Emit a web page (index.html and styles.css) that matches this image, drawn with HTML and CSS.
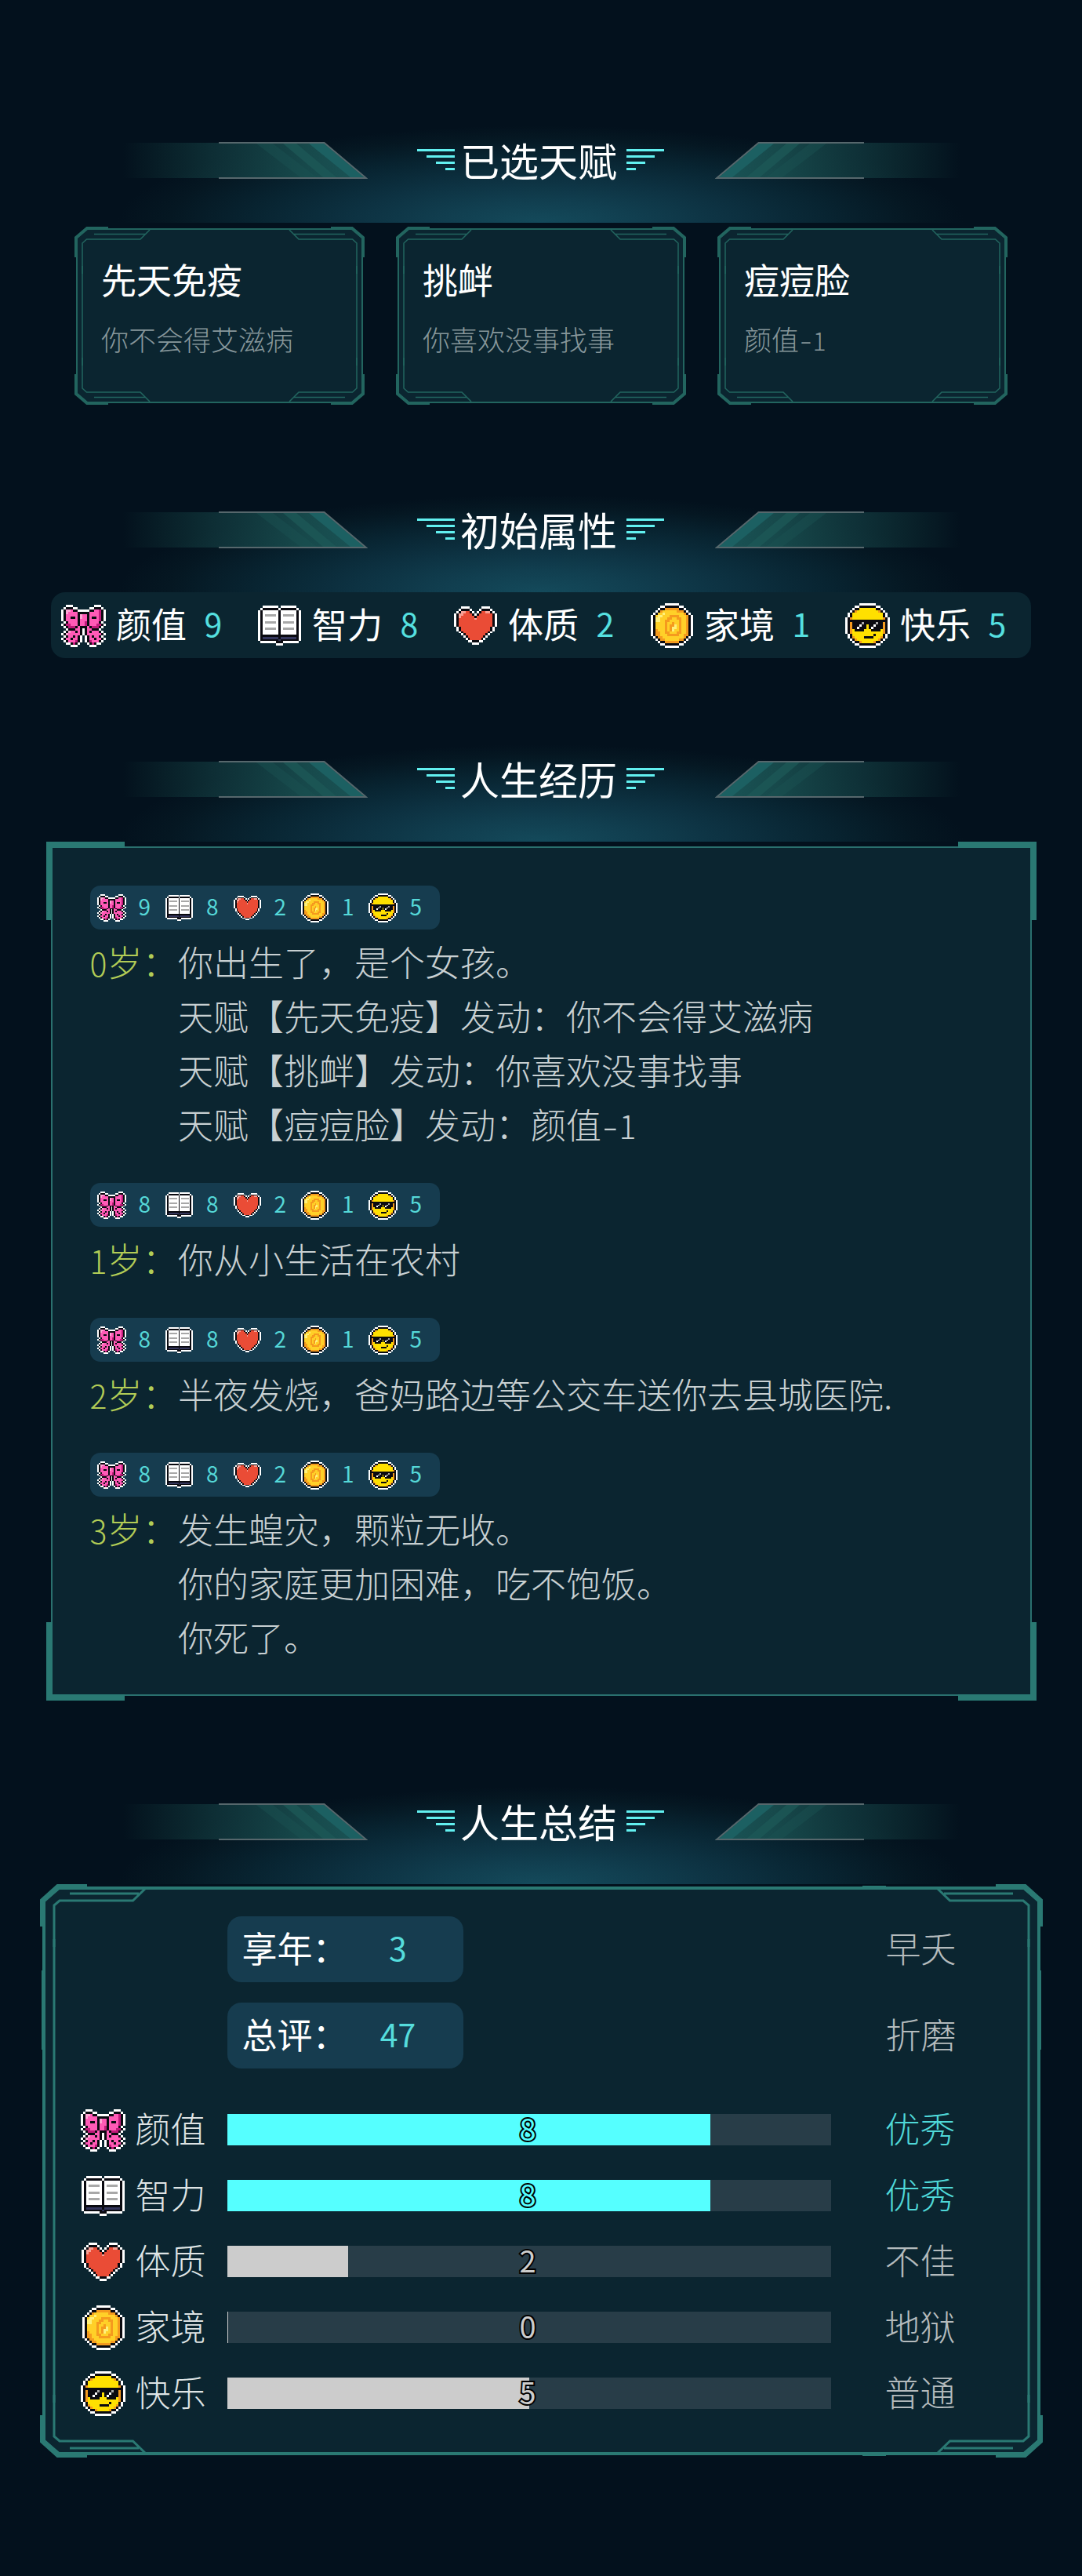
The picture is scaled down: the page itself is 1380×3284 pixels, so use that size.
FILE: index.html
```html
<!DOCTYPE html>
<html lang="zh-CN">
<head>
    <meta charset="UTF-8">
    <meta name="viewport" content="width=device-width, initial-scale=1.0">
    <title>人生总结</title>
    <link rel="stylesheet" href="styles.css">
</head>
<body>
    <!-- shared shapes -->
    <svg class="defs" width="0" height="0">
        <defs>
            <linearGradient id="plateFill" x1="0" x2="1" y1="0" y2="0">
                <stop offset="0" stop-color="#14403f" stop-opacity="0"/>
                <stop offset="0.4" stop-color="#123a3f" stop-opacity="0.75"/>
                <stop offset="0.75" stop-color="#17494b"/>
                <stop offset="1" stop-color="#1a5557"/>
            </linearGradient>
            <symbol id="plate" viewBox="0 0 312 47">
                <path d="M0 1H256L310 46H0Z" fill="url(#plateFill)"/>
                <path d="M170 2H191L247 45H226Z" fill="#1b5352" opacity="0.45"/>
                <path d="M204 2H221L272 45H255Z" fill="#1d5856" opacity="0.8"/>
                <path d="M237 2H256L307 45H290Z" fill="#1c6062"/>
                <path d="M122 1H256.500L310 46H122" fill="none" stroke="#56676c" stroke-width="2"/>
            </symbol>
            <symbol id="wing" viewBox="0 0 48 27">
                <path d="M0 0H48V3H0ZM12 8H48V11H12ZM24 16H48V19H24ZM36 24H48V27H36Z" fill="#62f0f0"/>
            </symbol>
            <g id="cardCorner" fill="none" stroke="#22655f">
                <path d="M2 39V14L16 2H43" stroke-width="4"/>
                <path d="M10 60V21L15.500 16H84L96 4M25 9.500H91" stroke-width="1.500"/>
            </g>
            <symbol id="cardFrame" viewBox="0 0 370 227">
                <path d="M3 14L16 3H354L367 14V213L354 224H16L3 213Z" fill="#0b2530" stroke="#22655f" stroke-width="2"/>
                <path d="M10 50V177M360 50V177" stroke="#22655f" stroke-width="1.500"/>
                <use href="#cardCorner"/>
                <use href="#cardCorner" transform="translate(370 0) scale(-1 1)"/>
                <use href="#cardCorner" transform="translate(0 227) scale(1 -1)"/>
                <use href="#cardCorner" transform="translate(370 227) scale(-1 -1)"/>
            </symbol>
            <g id="panelCorner" fill="none" stroke="#2a7973">
                <path d="M3.500 54V21L23 3.500H60" stroke-width="7"/>
                <path d="M18 80V27L25 21H118.500L134 6M38 12H126" stroke-width="3"/>
            </g>
        </defs>
    </svg>

    <header class="section-title first">
        <svg class="plate"><use href="#plate"/></svg>
        <svg class="wing"><use href="#wing"/></svg>
        <h2>已选天赋</h2>
        <svg class="wing flip"><use href="#wing"/></svg>
        <svg class="plate flip"><use href="#plate"/></svg>
    </header>
    <section class="talents">
        <div class="card">
            <svg class="frame"><use href="#cardFrame"/></svg>
            <h3>先天免疫</h3>
            <p>你不会得艾滋病</p>
        </div>
        <div class="card">
            <svg class="frame"><use href="#cardFrame"/></svg>
            <h3>挑衅</h3>
            <p>你喜欢没事找事</p>
        </div>
        <div class="card">
            <svg class="frame"><use href="#cardFrame"/></svg>
            <h3>痘痘脸</h3>
            <p>颜值<span class="minus">-</span><span class="num">1</span></p>
        </div>
    </section>

    <header class="section-title second">
        <svg class="plate"><use href="#plate"/></svg>
        <svg class="wing"><use href="#wing"/></svg>
        <h2>初始属性</h2>
        <svg class="wing flip"><use href="#wing"/></svg>
        <svg class="plate flip"><use href="#plate"/></svg>
    </header>
    <section class="attributes">
        <div class="attribute"><svg class="icon" data-icon="bow"></svg><span class="name">颜值</span><span class="num value">9</span></div>
        <div class="attribute"><svg class="icon" data-icon="book"></svg><span class="name">智力</span><span class="num value">8</span></div>
        <div class="attribute"><svg class="icon" data-icon="heart"></svg><span class="name">体质</span><span class="num value">2</span></div>
        <div class="attribute"><svg class="icon" data-icon="coin"></svg><span class="name">家境</span><span class="num value">1</span></div>
        <div class="attribute"><svg class="icon" data-icon="face"></svg><span class="name">快乐</span><span class="num value">5</span></div>
    </section>

    <header class="section-title third">
        <svg class="plate"><use href="#plate"/></svg>
        <svg class="wing"><use href="#wing"/></svg>
        <h2>人生经历</h2>
        <svg class="wing flip"><use href="#wing"/></svg>
        <svg class="plate flip"><use href="#plate"/></svg>
    </header>
    <section class="history">
        <i class="corner tl"></i><i class="corner tr"></i><i class="corner bl"></i><i class="corner br"></i>
        <div class="record">
            <div class="status">
                <svg class="icon" data-icon="bow"></svg><span class="num">9</span>
                <svg class="icon" data-icon="book"></svg><span class="num">8</span>
                <svg class="icon" data-icon="heart"></svg><span class="num">2</span>
                <svg class="icon" data-icon="coin"></svg><span class="num">1</span>
                <svg class="icon" data-icon="face"></svg><span class="num">5</span>
            </div>
            <div class="event">
                <div class="age"><span class="num">0</span>岁：</div>
                <div class="text">
                    <p>你出生了，是个女孩。</p>
                    <p>天赋【先天免疫】发动：你不会得艾滋病</p>
                    <p>天赋【挑衅】发动：你喜欢没事找事</p>
                    <p>天赋【痘痘脸】发动：颜值<span class="minus">-</span><span class="num">1</span></p>
                </div>
            </div>
        </div>
        <div class="record">
            <div class="status">
                <svg class="icon" data-icon="bow"></svg><span class="num">8</span>
                <svg class="icon" data-icon="book"></svg><span class="num">8</span>
                <svg class="icon" data-icon="heart"></svg><span class="num">2</span>
                <svg class="icon" data-icon="coin"></svg><span class="num">1</span>
                <svg class="icon" data-icon="face"></svg><span class="num">5</span>
            </div>
            <div class="event">
                <div class="age"><span class="num">1</span>岁：</div>
                <div class="text">
                    <p>你从小生活在农村</p>
                </div>
            </div>
        </div>
        <div class="record">
            <div class="status">
                <svg class="icon" data-icon="bow"></svg><span class="num">8</span>
                <svg class="icon" data-icon="book"></svg><span class="num">8</span>
                <svg class="icon" data-icon="heart"></svg><span class="num">2</span>
                <svg class="icon" data-icon="coin"></svg><span class="num">1</span>
                <svg class="icon" data-icon="face"></svg><span class="num">5</span>
            </div>
            <div class="event">
                <div class="age"><span class="num">2</span>岁：</div>
                <div class="text">
                    <p>半夜发烧，爸妈路边等公交车送你去县城医院.</p>
                </div>
            </div>
        </div>
        <div class="record">
            <div class="status">
                <svg class="icon" data-icon="bow"></svg><span class="num">8</span>
                <svg class="icon" data-icon="book"></svg><span class="num">8</span>
                <svg class="icon" data-icon="heart"></svg><span class="num">2</span>
                <svg class="icon" data-icon="coin"></svg><span class="num">1</span>
                <svg class="icon" data-icon="face"></svg><span class="num">5</span>
            </div>
            <div class="event">
                <div class="age"><span class="num">3</span>岁：</div>
                <div class="text">
                    <p>发生蝗灾，颗粒无收。</p>
                    <p>你的家庭更加困难，吃不饱饭。</p>
                    <p>你死了。</p>
                </div>
            </div>
        </div>
    </section>

    <header class="section-title fourth">
        <svg class="plate"><use href="#plate"/></svg>
        <svg class="wing"><use href="#wing"/></svg>
        <h2>人生总结</h2>
        <svg class="wing flip"><use href="#wing"/></svg>
        <svg class="plate flip"><use href="#plate"/></svg>
    </header>
    <section class="summary">
        <svg class="frame" viewBox="0 0 1279 731">
            <path d="M5 21L24 5H1255L1274 21V710L1255 726H24L5 710Z" fill="#0b2530" stroke="#2a7973" stroke-width="4"/>
            <path d="M18 70V661M1261 70V661" stroke="#2a7973" stroke-width="3"/>
            <path d="M3 110V211M1276 110V211M1049 3H1079M1049 728H1079" stroke="#2a7973" stroke-width="2"/>
            <use href="#panelCorner"/>
            <use href="#panelCorner" transform="translate(1279 0) scale(-1 1)"/>
            <use href="#panelCorner" transform="translate(0 731) scale(1 -1)"/>
            <use href="#panelCorner" transform="translate(1279 731) scale(-1 -1)"/>
        </svg>
        <div class="total">
            <div class="badge"><span>享年：</span><span class="num">3</span></div>
            <span class="grade">早夭</span>
        </div>
        <div class="total">
            <div class="badge"><span>总评：</span><span class="num">47</span></div>
            <span class="grade">折磨</span>
        </div>
        <div class="bars">
            <div class="row good">
                <svg class="icon" data-icon="bow"></svg><span class="name">颜值</span>
                <div class="bar"><div class="fill" style="width: 80.1%"></div><span class="num">8</span></div>
                <span class="grade">优秀</span>
            </div>
            <div class="row good">
                <svg class="icon" data-icon="book"></svg><span class="name">智力</span>
                <div class="bar"><div class="fill" style="width: 80.1%"></div><span class="num">8</span></div>
                <span class="grade">优秀</span>
            </div>
            <div class="row">
                <svg class="icon" data-icon="heart"></svg><span class="name">体质</span>
                <div class="bar"><div class="fill" style="width: 20.1%"></div><span class="num">2</span></div>
                <span class="grade">不佳</span>
            </div>
            <div class="row">
                <svg class="icon" data-icon="coin"></svg><span class="name">家境</span>
                <div class="bar"><div class="fill" style="width: 0.1%"></div><span class="num">0</span></div>
                <span class="grade">地狱</span>
            </div>
            <div class="row">
                <svg class="icon" data-icon="face"></svg><span class="name">快乐</span>
                <div class="bar"><div class="fill" style="width: 50.1%"></div><span class="num">5</span></div>
                <span class="grade">普通</span>
            </div>
        </div>
    </section>
    <script src="icons.js"></script>
</body>
</html>
```
FILE: styles.css
```css
* {
    box-sizing: border-box;
}
body {
    margin: 0;
    min-height: 3284px;
    background-color: #03111d;
    color: #fff;
    font-family: "Noto Sans CJK SC", sans-serif;
    font-size: 45px;
    font-weight: 300;
    line-height: 1;
    display: flow-root;
}
h2, h3, p {
    margin: 0;
    font-weight: 400;
}
svg {
    display: block;
    flex-shrink: 0;
}
.defs {
    position: absolute;
}
.num {
    font-size: 41px;
    line-height: 1;
}
.minus {
    display: inline-block;
    width: 0.5em;
    text-align: center;
    transform: scaleX(1.3);
}
.flip {
    transform: scaleX(-1);
}
.frame {
    position: absolute;
    inset: 0;
    width: 100%;
    height: 100%;
}

/* section titles */
.section-title {
    width: 1080px;
    height: 124px;
    margin: 0 auto;
    padding-top: 21px;
    display: flex;
    align-items: flex-start;
    justify-content: center;
    background: radial-gradient(ellipse 540px 124px at 50% 100%, #144a5b 0%, #113f50 22%, #0d3242 44%, #082431 68%, #051722 88%, #03111d 100%);
}
.section-title.first {
    margin-top: 160px;
}
.section-title.second {
    margin-top: 115px;
}
.section-title.third {
    margin-top: 110px;
}
.section-title.fourth {
    margin-top: 116px;
}
.section-title h2 {
    width: 220px;
    padding-right: 5px;
    text-align: center;
    font-size: 50px;
    line-height: 50px;
    margin-top: -3px;
    white-space: nowrap;
}
.plate {
    width: 312px;
    height: 47px;
}
.wing {
    width: 48px;
    height: 27px;
    margin: 9px 0 0 63px;
}
.wing.flip {
    margin: 9px 65px 0 -1px;
}

/* talents */
.talents {
    display: flex;
    justify-content: center;
    gap: 40px;
    margin-top: 5px;
}
.card {
    position: relative;
    width: 370px;
    height: 227px;
    padding: 44px 34px;
}
.card h3, .card p {
    position: relative;
}
.card h3 {
    font-size: 45px;
    line-height: 45px;
}
.card p {
    margin-top: 36px;
    font-size: 35px;
    font-weight: 300;
    line-height: 35px;
    color: #87979b;
}
.card .num {
    font-size: 32px;
}

/* initial attributes */
.attributes {
    display: flex;
    align-items: center;
    width: 1250px;
    height: 84px;
    margin: 0 auto;
    padding-left: 13px;
    border-radius: 18px;
    background: #0b2530;
    font-weight: 400;
}
.attribute {
    width: 250px;
    flex-shrink: 0;
    display: flex;
    align-items: center;
}
.icon {
    width: 57px;
    height: 57px;
}
.attribute .name {
    margin-left: 13px;
    margin-top: -6px;
    width: 91px;
}
.attribute .value {
    width: 66px;
    margin-top: -6px;
    text-align: center;
    color: #55e0e0;
}

/* life records */
.history {
    position: relative;
    width: 1251px;
    height: 1083px;
    margin: 6px auto 0;
    padding: 48px 48px 0;
    border: 2px solid #2a706e;
    background: #0b2530;
}
.corner {
    position: absolute;
    width: 100px;
    height: 100px;
    border: 0 solid #2a7973;
}
.corner.tl {
    top: -8px;
    left: -8px;
    border-width: 8px 0 0 8px;
}
.corner.tr {
    top: -8px;
    right: -8px;
    border-width: 8px 8px 0 0;
}
.corner.bl {
    bottom: -8px;
    left: -8px;
    border-width: 0 0 8px 8px;
}
.corner.br {
    bottom: -8px;
    right: -8px;
    border-width: 0 8px 8px 0;
}
.record {
    margin-bottom: 38.5px;
}
.status {
    display: flex;
    align-items: center;
    width: 446px;
    height: 56px;
    margin-bottom: 8.5px;
    padding-left: 9px;
    border-radius: 13px;
    background: #163c4f;
}
.status .icon {
    width: 37px;
    height: 37px;
}
.status .num {
    width: 49.5px;
    margin-top: -4px;
    padding-right: 2px;
    text-align: center;
    font-size: 28px;
    font-weight: 400;
    color: #55d8d8;
}
.event {
    display: flex;
    line-height: 69px;
    color: #c8d0d2;
}
.age {
    position: relative;
    top: -3px;
    width: 112.5px;
    flex-shrink: 0;
    white-space: nowrap;
    color: #b2cc56;
}
.text p {
    position: relative;
    top: -3px;
    font-weight: 300;
    white-space: nowrap;
}

/* summary */
.summary {
    position: relative;
    width: 1279px;
    height: 731px;
    margin: 0 auto;
    padding: 41px 50px 0 52px;
}
.total, .bars {
    position: relative;
}
.total {
    display: flex;
    align-items: center;
    height: 84px;
    margin-bottom: 26px;
    padding-left: 187px;
}
.badge {
    display: flex;
    align-items: center;
    width: 301px;
    height: 84px;
    padding-left: 19px;
    border-radius: 18px;
    background: #163c4f;
    font-weight: 400;
}
.badge span:first-child {
    width: 135px;
    margin-top: -5px;
}
.badge .num {
    width: 128px;
    margin-top: -5px;
    text-align: center;
    color: #55dcdc;
}
.total .grade {
    margin-left: 539px;
}
.grade {
    color: #b4bbbd;
    margin-top: -5px;
    white-space: nowrap;
}
.bars {
    padding-top: 10px;
}
.row {
    display: flex;
    align-items: center;
    height: 84px;
}
.row .name {
    width: 117px;
    margin-left: 13px;
    margin-top: -5px;
    color: #dfe4e5;
}
.bar {
    position: relative;
    width: 770px;
    height: 40px;
    background: #283d48;
}
.fill {
    height: 100%;
    background: #ccc;
}
.bar .num {
    position: absolute;
    inset: 0;
    padding-right: 3px;
    text-align: center;
    line-height: 35px;
    font-size: 38px;
    font-weight: 400;
    color: #ccc;
    -webkit-text-stroke: 4px #000;
    paint-order: stroke fill;
}
.row .grade {
    margin-left: 69px;
}
.good .fill {
    background: #55ffff;
}
.good .bar .num {
    color: #55ffff;
}
.good .grade {
    color: #4fd8d8;
}
```
FILE: icons.js
```js
// pixel sprites, one letter per pixel
const colors = {
    W: '#ffffff', K: '#0a0a10', P: '#ff5ab6', L: '#ffa5d4', D: '#c01a7a',
    G: '#a8a8a8', N: '#34365c', R: '#ea4c36', H: '#f8a095',
    Y: '#ffd028', O: '#f59a1e', F: '#ffe000', C: '#fff07a'
};

const sprites = {
    bow: [
        '..WWW.........WWW..',
        '.WKKKWW.....WWKKKW.',
        'WKLLPKKWWWWWKKPPDKW',
        'WKLPPPPKKKKKPPPPDKW',
        'WKPPPPPKLPPKPPPPDKW',
        'WKPPKKPKLPPKPKKPDKW',
        'WKPPPPPKPPPKPPPPDKW',
        '.WKPPPPKPPDKPPPPKW.',
        'WKDDPPPKPPDKPPPDDKW',
        '.WKDDDKPKKKPKDDDKW.',
        '..WKKKPPKWKPPKKKW..',
        '.WKLPPKPKWKPKPPPKW.',
        'WKLPPPPPKWKPPPPPPKW',
        '.WKPPKPKW.WKPKPPKW.',
        'WKPPKPPKW.WKPPKPPKW',
        '.WKPPPDKW.WKDPPPKW.',
        '..WWKDKW...WKDKWW..',
        '....WWW.....WWW....'
    ],
    book: [
        '..WWWWWWW.WWWWWWW..',
        '.WKKKKKKKWKKKKKKKW.',
        'WKWWWWWWWKWWWWWWWKW',
        'WKWWWWWWWKWWWWWWWKW',
        'WKWGGGGGWKWGGGGGWKW',
        'WKWWWWWWWKWWWWWWWKW',
        'WKWWWWWWWKWWWWWWWKW',
        'WKWGGGGGWKWGGGGGWKW',
        'WKWWWWWWWKWWWWWWWKW',
        'WKWWWWWWWKWWWWWWWKW',
        'WKWGGGGGWKWGGGGGWKW',
        'WKWWWWWWWKWWWWWWWKW',
        'WKWWWWWWWKWWWWWWWKW',
        'WKKKKKKKKKKKKKKKKKW',
        'WKNNNNNNNKNNNNNNNKW',
        'WKKKKKKKKNKKKKKKKKW',
        '.WWWWWWWKKKWWWWWWW.',
        '........WWW........'
    ],
    heart: [
        '...WWWW.....WWWW...',
        '..WKKKKW...WKKKKW..',
        '.WKHHRRKW.WKRRHHKW.',
        'WKHHRRRRKWKRRRRRRKW',
        'WKHRRRRRRKRRRRRRRKW',
        'WKRRRRRRRHRRRRRRRKW',
        'WKRRRRRRRRRRRRRRRKW',
        'WKRRRRRRRRRRRRRRRKW',
        'WKRRRRRRRRRRRRRRRKW',
        '.WKRRRRRRRRRRRRRKW.',
        '.WKRRRRRRRRRRRRRKW.',
        '..WKRRRRRRRRRRRKW..',
        '...WKRRRRRRRRRKW...',
        '....WKRRRRRRRKW....',
        '.....WKRRRRRKW.....',
        '......WWKKKWW......',
        '........WWW........'
    ],
    coin: [
        '......WWWWWW......',
        '....WWKKKKKKWW....',
        '...WKKOOOOOOKKW...',
        '..WKOYYYYYYOOOKW..',
        '.WKYYCYYYYYYYYOKW.',
        'WKYCCYYYOOOOYYYOKW',
        'WKCCYYYOOYYOOYYOKW',
        'WKCCYYOOYYYYOYYOKW',
        'WKYYYYOYYOYYOYYOKW',
        'WKYYYYOYOOCYOYYOKW',
        'WKYYYYOYOCCYOYYOKW',
        'WKOYYYOYOCYYOYYOKW',
        'WKOOYYOOYYYOOYYOKW',
        'WKOOYYYOOOOOYYOOKW',
        '.WKOOYYYYYYYYYOKW.',
        '..WKOOYYYYYYOOKW..',
        '...WKKOOOOOOKKW...',
        '....WWKKKKKKWW....',
        '......WWWWWW......'
    ],
    face: [
        '......WWWWWWW......',
        '....WWKKKKKKKWW....',
        '...WKKFFFFFFFKKW...',
        '..WKOFFFFFFFFFOKW..',
        '.WKFFFFFFFFFFFFFKW.',
        '.WKFFFFFFFFFFFFFKW.',
        'WKOFFFFFFFFFFFFFOKW',
        'WKKKKKKKKKKKKKKKKKW',
        'WKOKKKKGKKKKKGKKOKW',
        'WKOKKKWKKFKKWKKKOKW',
        'WKOKKWKKKFKWKKKKOKW',
        'WKOFKKKKFFFKKKKFOKW',
        'WKOFFFFFFFFFFFFFOKW',
        '.WKFFFFFFFFFKFFFKW.',
        '.WKOFFFFKKKKFFFOKW.',
        '..WKOFFFFFFFFFOKW..',
        '...WKKOFFFFFOKKW...',
        '....WWKKKKKKKWW....',
        '......WWWWWWW......'
    ]
};

document.querySelectorAll('[data-icon]').forEach(svg => {
    const name = svg.dataset.icon;
    const rows = sprites[name];
    const size = name === 'book' || name === 'heart' ? 20 : 19;
    const x = (rows[0].length - size) / 2;
    const y = (rows.length - size) / 2;
    const paths = {};
    rows.forEach((row, r) => {
        [...row].forEach((c, i) => {
            if (c !== '.') paths[c] = (paths[c] || '') + `M${i} ${r}h1v1h-1z`;
        });
    });
    svg.setAttribute('viewBox', `${x} ${y} ${size} ${size}`);
    svg.setAttribute('shape-rendering', 'crispEdges');
    svg.innerHTML = Object.keys(paths).map(c => `<path fill="${colors[c]}" d="${paths[c]}"/>`).join('');
});
```
